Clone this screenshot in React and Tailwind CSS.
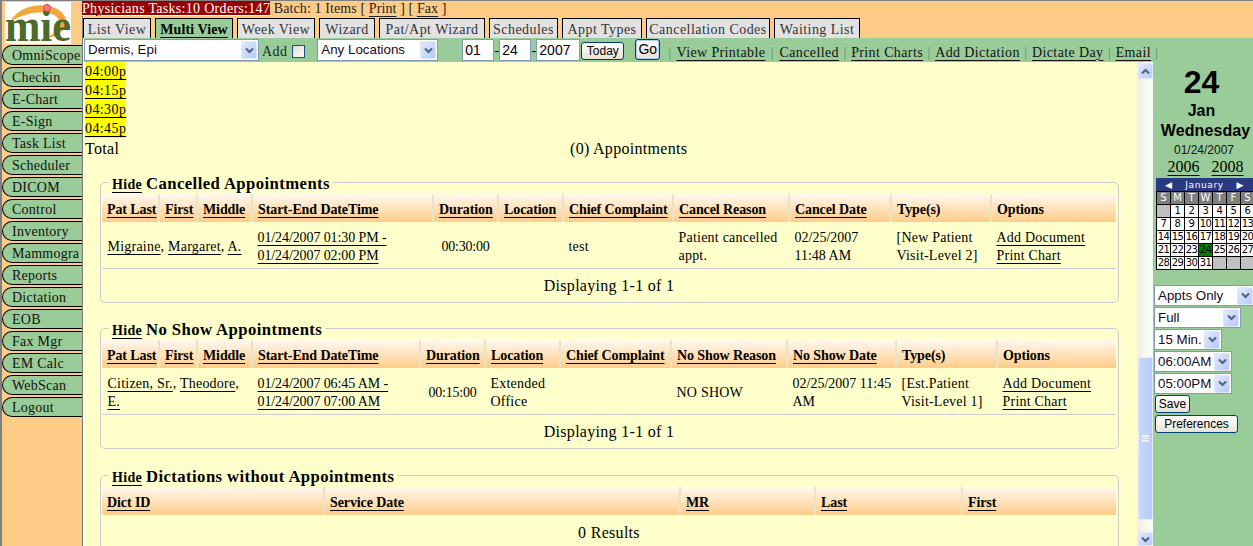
import React from "react";

const SANS = "font-['Liberation_Sans',Arial,sans-serif]";
const navItems = ["OmniScope","Checkin","E-Chart","E-Sign","Task List","Scheduler","DICOM","Control","Inventory","Mammogra","Reports","Dictation","EOB","Fax Mgr","EM Calc","WebScan","Logout"];
const tabs = [["List View","w-[68px]"],["Multi View","w-[78px]"],["Week View","w-[78px]"],["Wizard","w-[56px]"],["Pat/Apt Wizard","w-[106px]"],["Schedules","w-[69px]"],["Appt Types","w-[80px]"],["Cancellation Codes","w-[124px]"],["Waiting List","w-[86px]"]];
const links = ["View Printable","Cancelled","Print Charts","Add Dictation","Dictate Day","Email"];

function Logo() {
  return (
    <div className="ml-[3px] mt-[1px] h-[42px] w-[66px] bg-white">
      <svg width="66" height="42" viewBox="0 0 66 42">
        <path d="M5 20 C 12 6, 30 1, 44 4 C 58 7, 66 18, 58 28 C 54 33, 48 35, 42 36 C 50 31, 56 25, 54 18 C 50 9, 28 6, 5 20 Z" fill="#f2a63c" />
        <text x="0" y="39" fontFamily="'Liberation Serif',serif" fontWeight="700" fontSize="46" fill="#4b6a2c" textLength="66" lengthAdjust="spacingAndGlyphs">mie</text>
        <circle cx="42" cy="6" r="3.6" fill="#ef7878" stroke="#d84848" />
      </svg>
    </div>
  );
}

function Chevron({ up = false, color = "#4d6185" }) {
  return (
    <svg width="9" height="7" viewBox="0 0 9 7">
      <path d={up ? "M1 5.5 L4.5 2 L8 5.5" : "M1 1.5 L4.5 5 L8 1.5"} fill="none" stroke={color} strokeWidth="2" />
    </svg>
  );
}

function ArrowBtn({ up, className = "" }) {
  return (
    <span className={`flex items-center justify-center bg-gradient-to-br from-[#e2eafe] to-[#b7c9f8] border border-[#dfe7fb] rounded-[2px] ${className}`}>
      <Chevron up={up} />
    </span>
  );
}

function Select({ label, className = "" }) {
  return (
    <div className={`flex items-center justify-between bg-white border border-[#7f9db9] ${SANS} text-[13.33px] text-[#1a0a20] ${className}`}>
      <span className="pl-[3px] whitespace-nowrap">{label}</span>
      <ArrowBtn className="w-[16px] h-[18px] mr-[1px] shrink-0" />
    </div>
  );
}

function XpButton({ children, className = "" }) {
  return (
    <div className={`flex items-center justify-center rounded-[3px] border border-[#003c74] bg-gradient-to-b from-white to-[#e6e3d6] ${SANS} text-[12px] text-black ${className}`}>
      {children}
    </div>
  );
}

function Link({ children, className = "" }) {
  return <a className={`underline underline-offset-[3px] decoration-[1px] ${className}`}>{children}</a>;
}

function Head({ labels, plain = [] }) {
  return (
    <thead>
      <tr className="h-[28px]">
        {labels.map((l) => (
          <th key={l} className="bg-gradient-to-b from-[#fff8ee] to-[#ffcc88] border-r-2 border-[#e8e4c8] last:border-r-0 pl-[5px] pt-[2px] text-left text-[14px] font-bold tracking-[-0.1px] whitespace-nowrap">
            {plain.includes(l) ? l : <Link>{l}</Link>}
          </th>
        ))}
      </tr>
    </thead>
  );
}

function Section({ title, widths, labels, plain, row, footer, className = "" }) {
  return (
    <fieldset className={`ml-[16px] w-[1019px] border border-[#cccccc] rounded-[5px] px-px pb-0 ${className}`}>
      <legend className="ml-[7px] h-[20px] px-[3px] leading-[24px] whitespace-nowrap font-bold">
        <Link className="text-[14px] tracking-[0.3px]">Hide</Link>{" "}
        <span className="text-[16.7px] tracking-[0.42px]">{title}</span>
      </legend>
      <table className="mt-[2px] w-[1014px] table-fixed border-collapse">
        <colgroup>{widths.map((w, i) => <col key={i} style={{ width: w }} />)}</colgroup>
        <Head labels={labels} plain={plain} />
        <tbody>
          {row}
          {footer}
        </tbody>
      </table>
    </fieldset>
  );
}

function Td({ children, className = "", ...p }) {
  return <td className={`pl-[5.5px] pt-[4px] align-middle text-[14px] tracking-[0.22px] leading-[18px] ${className}`} {...p}>{children}</td>;
}

function DisplayFooter({ colSpan }) {
  return (
    <tr className="h-[34px]">
      <td colSpan={colSpan} className="pt-[2px] text-center text-[16px] tracking-[0.3px]">Displaying 1-1 of 1</td>
    </tr>
  );
}

function Calendar() {
  const cells = [];
  for (let i = 0; i < 35; i++) cells.push(i >= 1 && i <= 31 ? i : null);
  return (
    <div className="mt-[2px] ml-[3px] w-[97px] overflow-hidden font-['DejaVu_Sans',sans-serif] text-[10px] leading-[12px]">
      <div className="h-[13px] bg-[#2a3a80] text-white flex items-center justify-between px-[9px] text-[9px] tracking-[0.6px]">
        <span>◀</span><span>January</span><span>▶</span>
      </div>
      <div className="grid grid-cols-[repeat(7,13px)] bg-black gap-px border border-black w-[99px]">
        {["S","M","T","W","T","F","S"].map((d, i) => (
          <div key={i} className="h-[12px] bg-[#808080] text-white text-center">{d}</div>
        ))}
        {cells.map((d, i) => (
          <div key={i} className={`h-[12px] text-center tracking-[-0.5px] ${d === 24 ? "bg-[#008000] text-black" : d ? "bg-white text-black" : "bg-[#c0c0c0]"}`}>{d}</div>
        ))}
      </div>
    </div>
  );
}

export default function App() {
  return (
    <div className="w-[1253px] h-[546px] overflow-hidden flex border-t border-l-2 border-[#808080] bg-[#ffcc88] font-['Liberation_Serif',serif] text-black">
      <aside className="w-[81px] shrink-0 h-full bg-[#ffcc88] border-r border-[#777] overflow-hidden">
        <Logo />
        <nav className="flex flex-col gap-[2px] mt-px">
          {navItems.map((n) => (
            <div key={n} className="h-[20px] w-[80px] overflow-hidden bg-[#99cc99] border-y border-l border-black rounded-l-[10px] pl-[9px] text-[14px] tracking-[0.25px] leading-[20px] whitespace-nowrap text-[#111]">
              {n}
            </div>
          ))}
        </nav>
      </aside>

      <div className="flex-1 min-w-0 border-l border-white flex flex-col">
        <div className="h-[37px] shrink-0">
          <div className="h-[17px] text-[14px] leading-[15px] whitespace-nowrap -ml-[2px]">
            <span className="bg-[#990000] text-white underline underline-offset-2 tracking-[0.3px]">Physicians Tasks:10 Orders:147</span>
            <span className="text-[#222] tracking-[0.1px]"> Batch: 1 Items [ <Link>Print</Link> ] [ <Link>Fax</Link> ]</span>
          </div>
          <div className="flex gap-[4px] -ml-px">
            {tabs.map(([t, w]) => (
              <div key={t} className={`${w} h-[20px] border border-b-0 border-black text-center text-[14px] leading-[22px] whitespace-nowrap ${t === "Multi View" ? "bg-[#99cc99] font-bold tracking-[0.1px]" : "bg-[#e2e2e2] text-[#333] tracking-[0.45px]"}`}>
                {t === "Multi View" ? <Link>{t}</Link> : t}
              </div>
            ))}
          </div>
        </div>

        <div className="h-[24px] shrink-0 bg-[#99cc99] flex items-center text-[14px] whitespace-nowrap">
          <Select label="Dermis, Epi" className="w-[175px] h-[22px]" />
          <span className="ml-[3px] mt-[3px] tracking-[0.4px] text-[#222]">Add</span>
          <span className="ml-[5px] mt-[2px] w-[13px] h-[13px] border border-[#1c5180] bg-gradient-to-br from-[#dcdcd7] to-white" />
          <Select label="Any Locations" className="ml-[12px] w-[121px] h-[22px]" />
          <div className={`ml-[24px] w-[32px] h-[22px] bg-white border border-[#7f9db9] ${SANS} pl-[2px] leading-[20px]`}>01</div>
          <span className="w-[5px] text-center">-</span>
          <div className={`w-[32px] h-[22px] bg-white border border-[#7f9db9] ${SANS} pl-[2px] leading-[20px]`}>24</div>
          <span className="w-[5px] text-center">-</span>
          <div className={`w-[44px] h-[22px] bg-white border border-[#7f9db9] ${SANS} pl-[2px] leading-[20px]`}>2007</div>
          <XpButton className="ml-px w-[43px] h-[18px] mt-[1px]">Today</XpButton>
          <XpButton className="ml-[11px] w-[25px] h-[21px] !text-[14px] -mt-[2px] border-[#2a5ab0] shadow-[inset_0_0_0_1px_#b7c9f8]">Go</XpButton>
          <div className="ml-[8px] mt-[4px] flex items-center text-[14px] tracking-[0.38px] text-[#111]">
            {links.map((l, i) => (
              <React.Fragment key={l}>
                <span className={`text-[#5f8f70] ${i === 0 ? "pr-[5px]" : i === 1 ? "px-[5.5px]" : "px-[4.5px]"}`}>|</span>
                <Link>{l}</Link>
              </React.Fragment>
            ))}
            <span className="pl-[4px] text-[#5f8f70]">|</span>
          </div>
        </div>

        <div className="flex-1 min-h-0 flex">
          <main className="w-[1053px] h-full overflow-hidden bg-[#ffffcc]">
            <div className="flex flex-col text-[14px] tracking-[0.4px] leading-[19px] w-fit">
              {["04:00p","04:15p","04:30p","04:45p"].map((t) => (
                <div key={t} className="ml-px h-[19px] w-[40px] bg-[#ffff00]"><Link>{t}</Link></div>
              ))}
            </div>
            <div className="flex h-[20px] mt-px mb-[13px] pl-px text-[16px] tracking-[0.3px] leading-[20px]">
              <span className="w-[485px]">Total</span>
              <span>(0) Appointments</span>
            </div>

            <Section
              title="Cancelled Appointments"
              widths={[57,38,55,181,65,65,110,116,102,100,125]}
              labels={["Pat Last","First","Middle","Start-End DateTime","Duration","Location","Chief Complaint","Cancel Reason","Cancel Date","Type(s)","Options"]}
              plain={["Type(s)","Options"]}
              row={
                <tr className="h-[46px] border-b border-[#cccccc]">
                  <Td colSpan={3} className="whitespace-nowrap"><Link>Migraine</Link>, <Link>Margaret</Link>, <Link>A.</Link></Td>
                  <Td className="!tracking-[-0.1px]"><Link>01/24/2007 01:30 PM -</Link><br /><Link>01/24/2007 02:00 PM</Link></Td>
                  <Td className="text-center !pl-0 !tracking-[-0.2px]">00:30:00</Td>
                  <Td></Td>
                  <Td>test</Td>
                  <Td>Patient cancelled<br />appt.</Td>
                  <Td className="!tracking-[0px]">02/25/2007<br />11:48 AM</Td>
                  <Td>[New Patient<br />Visit-Level 2]</Td>
                  <Td><Link>Add Document</Link><br /><Link>Print Chart</Link></Td>
                </tr>
              }
              footer={<DisplayFooter colSpan={11} />}
            />

            <Section
              className="mt-[15px]"
              title="No Show Appointments"
              widths={[57,38,55,168,65,75,111,116,109,101,119]}
              labels={["Pat Last","First","Middle","Start-End DateTime","Duration","Location","Chief Complaint","No Show Reason","No Show Date","Type(s)","Options"]}
              plain={["Type(s)","Options"]}
              row={
                <tr className="h-[46px] border-b border-[#cccccc]">
                  <Td colSpan={3} className="whitespace-nowrap"><Link>Citizen, Sr.</Link>, <Link>Theodore</Link>,<br /><Link>E.</Link></Td>
                  <Td className="whitespace-nowrap !tracking-[-0.1px]"><Link>01/24/2007 06:45 AM -</Link><br /><Link>01/24/2007 07:00 AM</Link></Td>
                  <Td className="text-center !pl-0 !tracking-[-0.2px]">00:15:00</Td>
                  <Td>Extended<br />Office</Td>
                  <Td></Td>
                  <Td>NO SHOW</Td>
                  <Td className="whitespace-nowrap !tracking-[0px]">02/25/2007 11:45<br />AM</Td>
                  <Td className="whitespace-nowrap">[Est.Patient<br />Visit-Level 1]</Td>
                  <Td><Link>Add Document</Link><br /><Link>Print Chart</Link></Td>
                </tr>
              }
              footer={<DisplayFooter colSpan={11} />}
            />

            <Section
              className="mt-[16px]"
              title="Dictations without Appointments"
              widths={[222,356,135,147,154]}
              labels={["Dict ID","Service Date","MR","Last","First"]}
              row={<tr className="h-[34px]"><td colSpan={5} className="pt-[2px] text-center text-[16px] tracking-[0.3px]">0 Results</td></tr>}
              footer={null}
            />
          </main>

          <div className="w-[16px] h-full shrink-0 flex flex-col items-center bg-gradient-to-r from-[#f1f1e8] to-[#fcfcf8]">
            <ArrowBtn up className="w-[15px] h-[16px] mt-px" />
            <div className="flex-1" />
            <div className="w-[15px] h-[163px] flex items-center justify-center rounded-[2px] bg-gradient-to-r from-[#c8d8fb] to-[#b9ccf8] border border-[#e4ebfd]">
              <div className="w-[7px] h-[7px] border-y border-[#eef3fe] bg-[repeating-linear-gradient(#eef3fe_0,#eef3fe_1px,transparent_1px,transparent_2px)]" />
            </div>
            <ArrowBtn className="w-[15px] h-[14px] mt-[12px]" />
          </div>

          <aside className="w-[100px] h-full shrink-0 bg-[#99cc99] overflow-hidden">
            <div className={`${SANS} text-center text-black font-bold`}>
              <div className="text-[32px] leading-[36px] mt-[2px] pr-[3px]">24</div>
              <div className="text-[16px] leading-[18px] mt-[2px] pr-[3px]">Jan</div>
              <div className="text-[16px] leading-[20px] mt-px tracking-[0.1px] whitespace-nowrap pl-[5px]">Wednesday</div>
              <div className="text-[12px] font-normal leading-[16px] mt-px text-[#111] pl-[2px]">01/24/2007</div>
            </div>
            <div className="flex justify-center gap-[12px] pl-[5px] text-[16px] leading-[18px]">
              <Link>2006</Link><Link>2008</Link>
            </div>
            <Calendar />
            <div className="mt-[15px] ml-px flex flex-col gap-px">
              <Select label="Appts Only" className="w-[101px] h-[21px]" />
              <Select label="Full" className="w-[87px] h-[21px]" />
              <Select label="15 Min." className="w-[68px] h-[21px]" />
              <Select label="06:00AM" className="w-[78px] h-[21px]" />
              <Select label="05:00PM" className="w-[78px] h-[21px]" />
            </div>
            <XpButton className="mt-[1px] ml-[2px] w-[35px] h-[18px]">Save</XpButton>
            <XpButton className="mt-[2px] ml-[2px] w-[83px] h-[18px]">Preferences</XpButton>
          </aside>
        </div>
      </div>
    </div>
  );
}
